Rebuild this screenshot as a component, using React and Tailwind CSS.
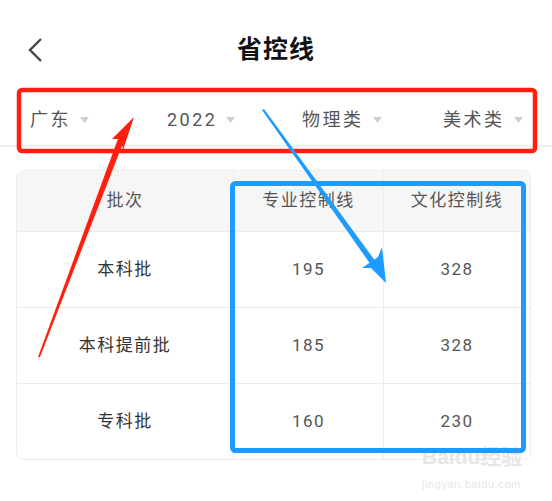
import React from 'react';

const filters = ['广东', '2022', '物理类', '美术类'];

const rows = [
  { name: '本科批', pro: '195', cul: '328' },
  { name: '本科提前批', pro: '185', cul: '328' },
  { name: '专科批', pro: '160', cul: '230' },
];

const Caret = () => (
  <svg width="9" height="6" viewBox="0 0 9 6" className="ml-[9px]">
    <path d="M0 0 L9 0 L4.5 6 Z" fill="#cfcfcf" />
  </svg>
);

const Annotations = () => (
  <svg className="absolute inset-0 pointer-events-none" width="552" height="501" viewBox="0 0 552 501">
    {/* red box */}
    <rect x="19" y="90" width="516" height="61" rx="3" fill="none" stroke="#ff1f0f" strokeWidth="4.5" />
    {/* red arrow */}
    <polygon points="38,357 40,357 125,138 119,136" fill="#ff1f0f" />
    <polygon points="134,117 112,139 121,139 123,150" fill="#ff1f0f" />
    {/* blue box */}
    <rect x="232.5" y="183.5" width="291" height="267" rx="3" fill="none" stroke="#1e9bff" strokeWidth="5" />
    {/* blue arrow */}
    <polygon points="262,110 264,109 376,262 371,265" fill="#1e9bff" />
    <polygon points="386,283 382,247 378,257 362,268 371,268" fill="#1e9bff" />
  </svg>
);

export default function App() {
  return (
    <div className="relative w-[552px] h-[501px] overflow-hidden bg-white" style={{ fontFamily: 'Roboto, "Noto Sans CJK SC", sans-serif' }}>
      <div className="relative h-[94px] flex items-center justify-center pt-[6px]">
        <svg className="absolute left-[27px] top-[38px]" width="16" height="24" viewBox="0 0 16 24">
          <path d="M14 1 L3 12 L14 23" fill="none" stroke="#444" strokeWidth="2.4" />
        </svg>
        <h1 className="text-[25px] font-bold text-[#111] tracking-[1px]">省控线</h1>
      </div>

      <div className="h-[53px] grid grid-cols-[137px_135px_141px_1fr] items-center pl-[30px] border-b-[2px] border-[#efefef]">
        {filters.map((f) => (
          <div key={f} className="flex items-center text-[18px] text-[#555] tracking-[2.5px]">
            <span>{f}</span>
            <Caret />
          </div>
        ))}
      </div>

      <div className="mt-[23px] ml-[16px] w-[515px] rounded-[8px] border border-[#ececec] overflow-hidden text-[17px] tracking-[1.5px]">
        <div className="grid grid-cols-[216px_150px_1fr] h-[60px] bg-[#f6f6f6] text-[#555]">
          <div className="flex items-center justify-center">批次</div>
          <div className="flex items-center justify-center border-l border-[#ececec]">专业控制线</div>
          <div className="flex items-center justify-center border-l border-[#ececec]">文化控制线</div>
        </div>
        {rows.map((r) => (
          <div key={r.name} className="grid grid-cols-[216px_150px_1fr] h-[76px] border-t border-[#ececec]">
            <div className="flex items-center justify-center text-[#333]">{r.name}</div>
            <div className="flex items-center justify-center border-l border-[#ececec] text-[#555]">{r.pro}</div>
            <div className="flex items-center justify-center border-l border-[#ececec] text-[#555]">{r.cul}</div>
          </div>
        ))}
      </div>

      <div className="absolute left-[422px] top-[446px] flex flex-col items-start text-[#e6e6e6] leading-none">
        <span className="text-[21px] font-bold" style={{ fontFamily: '"Liberation Sans", "Noto Sans CJK SC", sans-serif' }}>Baidu经验</span>
        <span className="text-[11px] mt-[12px] tracking-[0.6px]" style={{ fontFamily: '"Liberation Sans", sans-serif' }}>jingyan.baidu.com</span>
      </div>

      <Annotations />
    </div>
  );
}
